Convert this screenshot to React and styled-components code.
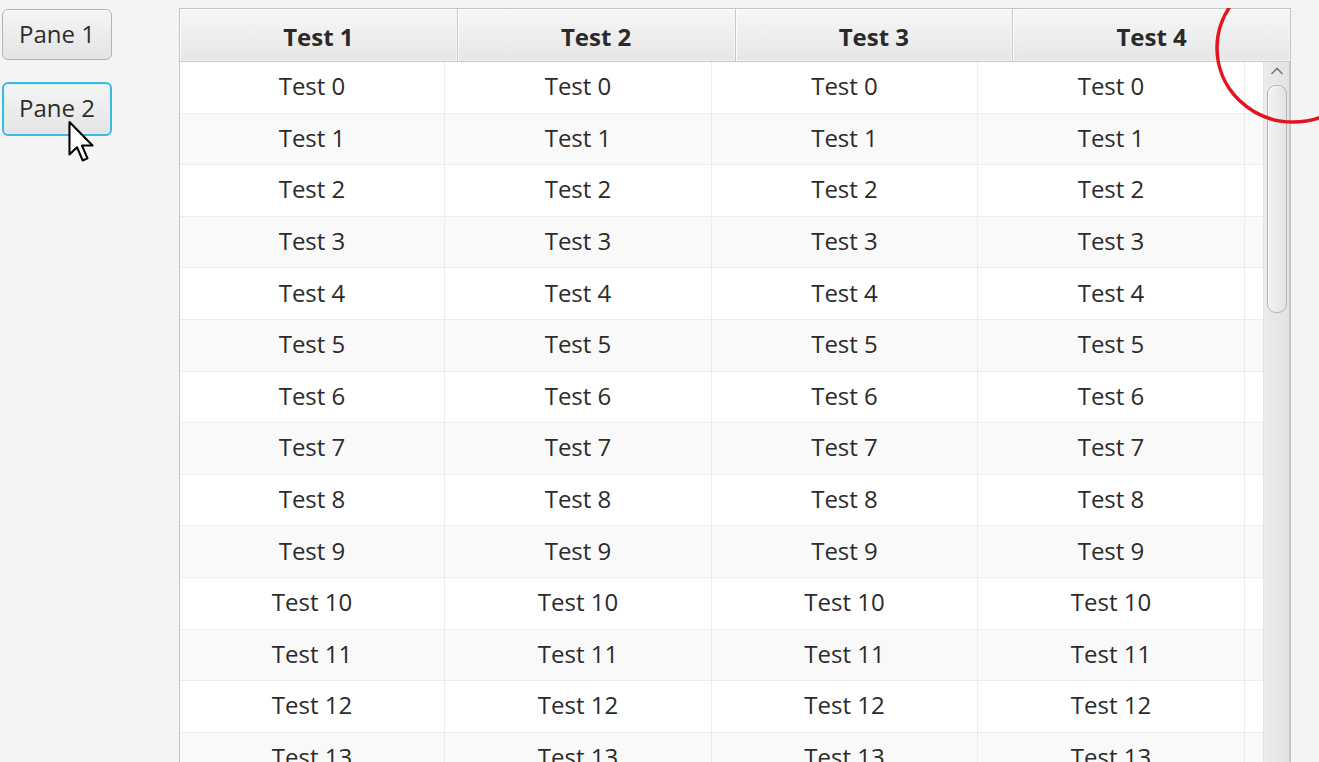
import React from 'react'
import styled, { createGlobalStyle } from 'styled-components'

const GlobalStyle = createGlobalStyle`
  html, body {
    margin: 0;
    padding: 0;
    background: #f4f4f4;
    font-family: "Open Sans", "Noto Sans", sans-serif;
    overflow: hidden;
  }
`

const rows = Array.from({ length: 14 }, (_, i) => `Test ${i}`)
const headers = ['Test 1', 'Test 2', 'Test 3', 'Test 4']

const App = () => {
  return (
    <Page>
      <GlobalStyle />
      <Sidebar>
        <PaneButton>Pane 1</PaneButton>
        <PaneButton focused>Pane 2</PaneButton>
        <Cursor viewBox="0 0 13 21" width="28" height="44">
          <path
            d="M1 1 L1 16.5 L4.6 13 L7.3 19.3 L9.6 18.3 L7 12.2 L12 12.2 Z"
            fill="#fff"
            stroke="#000"
            strokeWidth="1"
            strokeLinejoin="round"
          />
        </Cursor>
      </Sidebar>

      <Table>
        <HeaderRow>
          {headers.map((h) => (
            <HeaderCell key={h}>{h}</HeaderCell>
          ))}
        </HeaderRow>
        <Body>
          <Rows>
            {rows.map((r, i) => (
              <Row key={r} odd={i % 2 === 1}>
                <Cell>{r}</Cell>
                <Cell>{r}</Cell>
                <Cell>{r}</Cell>
                <Cell>{r}</Cell>
                <Cell />
              </Row>
            ))}
          </Rows>
          <ScrollBar>
            <ArrowUp viewBox="0 0 14 8" width="14" height="8">
              <path d="M1.5 7 L7 1.5 L12.5 7" fill="none" stroke="#7a7a7a" strokeWidth="1.6" />
            </ArrowUp>
            <Thumb />
          </ScrollBar>
        </Body>
      </Table>

      <Marker viewBox="0 0 170 160" width="170" height="160">
        <ellipse cx="85" cy="40" rx="76" ry="74" fill="none" stroke="#e4141b" strokeWidth="3.5" />
      </Marker>
    </Page>
  )
}

export default App

const Page = styled.div`
  position: relative;
  display: flex;
  align-items: flex-start;
  width: 1319px;
  height: 762px;
  overflow: hidden;
  background: #f4f4f4;
`

const Sidebar = styled.div`
  position: relative;
  display: flex;
  flex-direction: column;
  gap: 22px;
  width: 177px;
  padding: 9px 0 0 2px;
  flex-shrink: 0;
`

const PaneButton = styled.div`
  width: 110px;
  height: ${(p) => (p.focused ? '54px' : '51px')};
  box-sizing: border-box;
  display: flex;
  align-items: center;
  justify-content: center;
  border-radius: 6px;
  border: ${(p) => (p.focused ? '2px solid #3cb8e4' : '1px solid #b3b3b3')};
  box-shadow: ${(p) => (p.focused ? 'inset 0 0 0 1px #d9f0f8' : 'inset 0 1px 0 #fbfbfb')};
  background: linear-gradient(#f5f5f5, #e4e4e4);
  font-size: 24px;
  color: #2d2d2d;
  padding-bottom: 3px;
`

const Cursor = styled.svg`
  position: absolute;
  left: 67px;
  top: 120px;
`

const Table = styled.div`
  width: 1110px;
  margin-top: 8px;
  border: 1px solid #c4c4c4;
  border-bottom: none;
  background: #fff;
  display: flex;
  flex-direction: column;
  height: 760px;
  overflow: hidden;
`

const HeaderRow = styled.div`
  display: flex;
  height: 52px;
  flex-shrink: 0;
  border-bottom: 1px solid #c8c8c8;
`

const HeaderCell = styled.div`
  flex: 1;
  display: flex;
  align-items: center;
  justify-content: center;
  box-sizing: border-box;
  background: linear-gradient(#f7f7f7, #e6e6e6);
  border-right: 1px solid #c9c9c9;
  box-shadow: inset 1px 1px 0 #fdfdfd, inset -1px -1px 0 #f4f4f4;
  font-size: 24px;
  font-weight: 700;
  color: #2a2a2a;
  padding-top: 2px;
  &:last-child {
    border-right: none;
  }
`

const Body = styled.div`
  display: flex;
  flex: 1;
`

const Rows = styled.div`
  flex: 1;
  display: flex;
  flex-direction: column;
`

const Row = styled.div`
  display: grid;
  grid-template-columns: 265px 267px 266px 267px 1fr;
  height: 51.6px;
  flex-shrink: 0;
  box-sizing: border-box;
  background: ${(p) => (p.odd ? '#f9f9f9' : '#ffffff')};
  border-bottom: 1px solid #ededed;
`

const Cell = styled.div`
  display: flex;
  align-items: center;
  justify-content: center;
  border-right: 1px solid #ececec;
  font-size: 24px;
  color: #2b2b2b;
  padding-bottom: 3px;
  &:last-child {
    border-right: none;
  }
`

const ScrollBar = styled.div`
  position: relative;
  width: 27px;
  flex-shrink: 0;
  box-sizing: border-box;
  background: linear-gradient(90deg, #ececec, #e2e2e2);
  border-left: 1px solid #e4e4e4;
  border-right: 1px solid #cdcdcd;
  display: flex;
  flex-direction: column;
  align-items: center;
  padding-top: 5px;
`

const ArrowUp = styled.svg`
  margin-bottom: 10px;
`

const Thumb = styled.div`
  width: 20px;
  height: 228px;
  box-sizing: border-box;
  border: 1px solid #b4b4b4;
  border-radius: 9px;
  background: linear-gradient(90deg, #f3f3f3, #e3e3e3);
  box-shadow: inset 1px 1px 0 #fcfcfc;
`

const Marker = styled.svg`
  position: absolute;
  left: 1208px;
  top: 8px;
  pointer-events: none;
`
